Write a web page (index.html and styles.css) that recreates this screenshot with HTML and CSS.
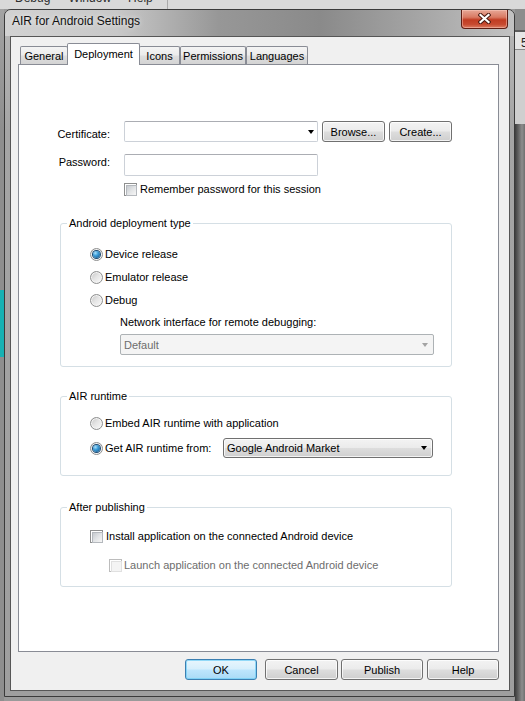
FILE: index.html
```html
<!DOCTYPE html>
<html>
<head>
<meta charset="utf-8">
<title>AIR for Android Settings</title>
<link rel="stylesheet" href="styles.css">
</head>
<body>
<div class="menubar">
  <div class="menu-items"><span>Debug</span><span>Window</span><span>Help</span><i class="menu-sep"></i></div>
</div>
<div class="desktop">
  <div class="edge-left"></div>
  <div class="window">
    <div class="titlebar">
      <span class="title">AIR for Android Settings</span>
      <div class="close">
        <svg width="13" height="11" viewBox="0 0 13 11"><path d="M2.5 2 L10.5 9 M10.5 2 L2.5 9" stroke="#4a1a12" stroke-width="4.2" stroke-linecap="square" fill="none"/><path d="M2.5 2 L10.5 9 M10.5 2 L2.5 9" stroke="#ffffff" stroke-width="2.2" stroke-linecap="square" fill="none"/></svg>
      </div>
    </div>
    <div class="client">
      <div class="tabs">
        <div class="tab t-general">General</div>
        <div class="tab t-deploy selected">Deployment</div>
        <div class="tab t-icons">Icons</div>
        <div class="tab t-perm">Permissions</div>
        <div class="tab t-lang">Languages</div>
      </div>
      <div class="panel">
        <div class="form">
          <div class="lbl cert">Certificate:</div>
          <div class="ctl-row">
            <div class="combo"><span class="arrow"></span></div>
            <div class="btn browse">Browse...</div>
            <div class="btn create">Create...</div>
          </div>
          <div class="lbl pass">Password:</div>
          <div class="ctl-row pw"><div class="textbox"></div></div>
          <div class="spacer"></div>
          <div class="opt remember"><span class="cb"></span><span>Remember password for this session</span></div>
        </div>

        <fieldset class="group g1">
          <legend>Android deployment type</legend>
          <div class="opt"><span class="radio on"></span><span>Device release</span></div>
          <div class="opt"><span class="radio"></span><span>Emulator release</span></div>
          <div class="opt"><span class="radio"></span><span>Debug</span></div>
          <div class="subl">Network interface for remote debugging:</div>
          <div class="sel disabled"><span class="sel-text">Default</span><span class="arrow grey"></span></div>
        </fieldset>

        <fieldset class="group g2">
          <legend>AIR runtime</legend>
          <div class="opt"><span class="radio"></span><span>Embed AIR runtime with application</span></div>
          <div class="opt tall"><span class="radio on"></span><span class="fromlbl">Get AIR runtime from:</span>
            <div class="sel dd"><span class="sel-text">Google Android Market</span><span class="arrow"></span></div>
          </div>
        </fieldset>

        <fieldset class="group g3">
          <legend>After publishing</legend>
          <div class="opt"><span class="cb install"></span><span>Install application on the connected Android device</span></div>
          <div class="opt dim"><span class="cb off launch"></span><span>Launch application on the connected Android device</span></div>
        </fieldset>
      </div>
      <div class="actions">
        <div class="btn ok">OK</div>
        <div class="btn cancel">Cancel</div>
        <div class="btn publish">Publish</div>
        <div class="btn help">Help</div>
      </div>
    </div>
  </div>
  <div class="edge-right">
    <div class="er-top"></div>
    <div class="er-tab">5</div>
    <div class="er-mid"></div>
    <div class="er-low"></div>
  </div>
</div>
</body>
</html>
```

FILE: styles.css
```css
* { box-sizing: border-box; }
html, body { margin: 0; padding: 0; }
body {
  width: 525px;
  height: 701px;
  overflow: hidden;
  background: #9a9a9a;
  font-family: "Liberation Sans", Arial, sans-serif;
  font-size: 11px;
  color: #000;
}

/* background application */
.menubar { height: 9px; overflow: hidden; background: #d9d9d9; }
.menu-items {
  display: flex;
  margin-top: -11px;
  padding-left: 15px;
  line-height: 18px;
  font-size: 12px;
  color: #2e2e2e;
}
.menu-items span { margin-right: 18px; }
.menu-items span:nth-child(2) { margin-right: 17px; }
.menu-sep { display: block; width: 1px; height: 22px; background: #a9a9a9; margin-left: -4px; }

.desktop { display: flex; height: 692px; }
.edge-left {
  width: 4px;
  background: linear-gradient(to bottom, #a3a3a3 0, #8e8e8e 120px, #8e8e8e 281px, #17b1b3 281px, #17b1b3 348px, #8e8e8e 348px, #8e8e8e 100%);
}
.edge-right { width: 10px; display: flex; flex-direction: column; }
.er-top { height: 23px; background: #8d8d8d; border-bottom: 2px solid #5c5c5c; }
.er-tab { height: 18px; background: #e6e6e6; font-size: 12px; line-height: 18px; padding: 2px 0 0 6px; color: #222; border-bottom: 1px solid #8a8a8a; overflow: hidden; }
.er-mid { height: 74px; background: #cfcfcf; }
.er-low { flex: 1; background: linear-gradient(to right, #3e3e3e 0, #5f5f5f 30%, #8d8d8d 70%, #6f6f6f 100%); }

/* dialog window */
.window {
  width: 511px;
  height: 688px;
  display: flex;
  flex-direction: column;
  border: 1px solid #3a3a3a;
  border-radius: 7px 7px 0 0;
  background: linear-gradient(to bottom, #b9b9b9 0, #a5a5a5 120px, #9e9e9e 100%);
}
.titlebar {
  height: 26px;
  flex: none;
  display: flex;
  align-items: flex-start;
  padding: 0 6px 0 7px;
  border-radius: 6px 6px 0 0;
  background: linear-gradient(to right, #d2d2d2 0, #c8c8c8 22%, #979797 42%, #8a8a8a 62%, #a6a6a6 82%, #c2c2c2 100%);
}
.title {
  font-size: 12px;
  line-height: 23px;
  color: #111;
  text-shadow: 0 0 5px rgba(255, 255, 255, 0.85);
}
.close {
  margin-left: auto;
  width: 47px;
  height: 19px;
  display: flex;
  align-items: center;
  justify-content: center;
  border: 1px solid #5e1d13;
  border-top: none;
  border-radius: 0 0 4px 4px;
  background: linear-gradient(to bottom, #e7a796 0, #d97a63 40%, #c13c22 55%, #c74a30 80%, #dc7d62 100%);
  box-shadow: inset 0 0 0 1px rgba(255, 210, 200, 0.45);
}
.close svg { display: block; margin-top: -2px; }

.client {
  flex: 1;
  margin: 0 4px 5px 5px;
  border: 1px solid #565656;
  background: #f0f0f0;
  padding: 6px 0 0 7px;
}

/* tabs */
.tabs {
  display: flex;
  align-items: flex-end;
  height: 21px;
  padding-left: 2px;
  position: relative;
  z-index: 1;
}
.tab {
  height: 18px;
  border: 1px solid #898c95;
  border-bottom: none;
  border-radius: 2px 2px 0 0;
  text-align: center;
  line-height: 16px;
  padding-top: 1px;
  background: linear-gradient(to bottom, #f4f4f4 0, #ececec 45%, #dedede 55%, #d3d3d3 100%);
}
.tab.selected {
  height: 22px;
  margin-bottom: -1px;
  background: #fff;
  line-height: 18px;
  padding-top: 1px;
}
.t-general { width: 48px; }
.t-deploy { width: 73px; margin-left: -1px; }
.t-icons { width: 41px; margin-left: -1px; }
.t-perm { width: 66px; }
.t-lang { width: 62px; }

.panel {
  width: 481px;
  height: 588px;
  background: #fff;
  border: 1px solid #898c95;
}

/* top form */
.form {
  display: grid;
  grid-template-columns: 91px 1fr;
  column-gap: 14px;
  padding-top: 56px;
}
.lbl { text-align: right; line-height: 15px; }
.lbl.cert { margin-top: 6px; }
.lbl.pass { margin-top: 12px; line-height: 16px; }
.ctl-row { display: flex; }
.ctl-row.pw { margin-top: 12px; }
.combo, .textbox {
  width: 194px;
  border: 1px solid #ccd1d8;
  border-top-color: #abadb3;
  border-radius: 2px;
  background: #fff;
}
.combo {
  height: 21px;
  display: flex;
  align-items: center;
  justify-content: flex-end;
  padding-right: 3px;
}
.textbox { height: 22px; }
.spacer { height: 16px; }
.remember { margin-top: 5px; }
.remember .cb { margin-right: 3px; }

/* buttons */
.btn {
  height: 21px;
  display: flex;
  align-items: center;
  justify-content: center;
  border: 1px solid #707070;
  border-radius: 3px;
  background: linear-gradient(to bottom, #f3f3f3 0, #ebebeb 48%, #dddddd 52%, #cfcfcf 100%);
  box-shadow: inset 0 0 0 1px rgba(255, 255, 255, 0.75);
  line-height: 14px;
}
.browse { width: 63px; margin-left: 4px; }
.create { width: 63px; margin-left: 4px; }

/* arrows */
.arrow {
  width: 0;
  height: 0;
  border-left: 3.5px solid transparent;
  border-right: 3.5px solid transparent;
  border-top: 4px solid #000;
}
.arrow.grey { border-top-color: #a3a3a3; }

/* radio and checkbox */
.radio {
  flex: none;
  width: 13px;
  height: 13px;
  border-radius: 50%;
  border: 1px solid #8e8f8f;
  background: linear-gradient(135deg, #c4c4c4 0, #e4e4e4 45%, #fbfbfb 100%);
  box-shadow: inset 0 0 0 1px #f4f4f4;
  display: grid;
  place-items: center;
  margin-left: 29px;
  margin-right: 2px;
}
.radio.on::after {
  content: "";
  width: 7px;
  height: 7px;
  border-radius: 50%;
  background: radial-gradient(circle at 35% 30%, #a9e0fb 0, #3a9ad6 40%, #124e80 100%);
  box-shadow: 0 0 0 1px #1d4a72;
}
.cb {
  flex: none;
  width: 13px;
  height: 13px;
  border: 1px solid #8e8f8f;
  background: #fff;
  padding: 1px;
}
.cb::before {
  content: "";
  display: block;
  width: 9px;
  height: 9px;
  border: 1px solid #b4b8bd;
  background: linear-gradient(135deg, #c6cacf 0, #e2e4e6 50%, #f6f6f6 100%);
}
.cb.off { border-color: #bcbcbc; }
.cb.off::before { border-color: #e0e0e0; background: #f4f4f4; }

/* group boxes */
.group {
  margin: 0 0 0 41px;
  width: 392px;
  border: 1px solid #d5dfe5;
  border-radius: 3px;
  padding: 0;
  min-width: 0;
}
.group legend {
  margin-left: 6px;
  padding: 0 2px;
  line-height: 14px;
}
.opt { display: flex; align-items: center; height: 16px; }
.opt + .opt { margin-top: 7px; }
.g1 { margin-top: 19px; padding: 16px 0 11px 0; }
.subl { margin: 6px 0 0 59px; line-height: 16px; }
.sel {
  height: 21px;
  display: flex;
  align-items: center;
  justify-content: space-between;
  padding: 0 5px 0 3px;
  border-radius: 2px;
}
.sel.disabled {
  margin: 4px 0 0 59px;
  width: 314px;
  border: 1px solid #adb2b5;
  background: #f4f4f4;
  color: #6d6d6d;
}
.g2 { margin-top: 22px; padding: 12px 0 17px 0; }
.opt.tall { height: 20px; }
.fromlbl { width: 118px; flex: none; }
.sel.dd {
  width: 210px;
  height: 20px;
  border: 1px solid #707070;
  border-radius: 3px;
  background: linear-gradient(to bottom, #f3f3f3 0, #ebebeb 48%, #dddddd 52%, #cfcfcf 100%);
  box-shadow: inset 0 0 0 1px rgba(255, 255, 255, 0.75);
}
.g3 { margin-top: 24px; padding: 14px 0 13px 0; }
.g3 .opt + .opt { margin-top: 13px; }
.cb.install { margin-left: 29px; margin-right: 3px; }
.cb.launch { margin-left: 48px; margin-right: 2px; }
.opt.dim { color: #6d6d6d; }

/* bottom buttons */
.actions {
  display: flex;
  justify-content: flex-end;
  width: 481px;
  margin-top: 7px;
}
.ok {
  width: 72px;
  margin-right: 8px;
  border-color: #3c7fb1;
  background: linear-gradient(to bottom, #e8f6fd 0, #d6effc 48%, #bee6fd 52%, #a9dbf6 100%);
  box-shadow: inset 0 0 0 1px rgba(110, 205, 245, 0.7);
}
.cancel { width: 73px; margin-right: 3px; }
.publish { width: 82px; margin-right: 4px; }
.help { width: 72px; }
```
